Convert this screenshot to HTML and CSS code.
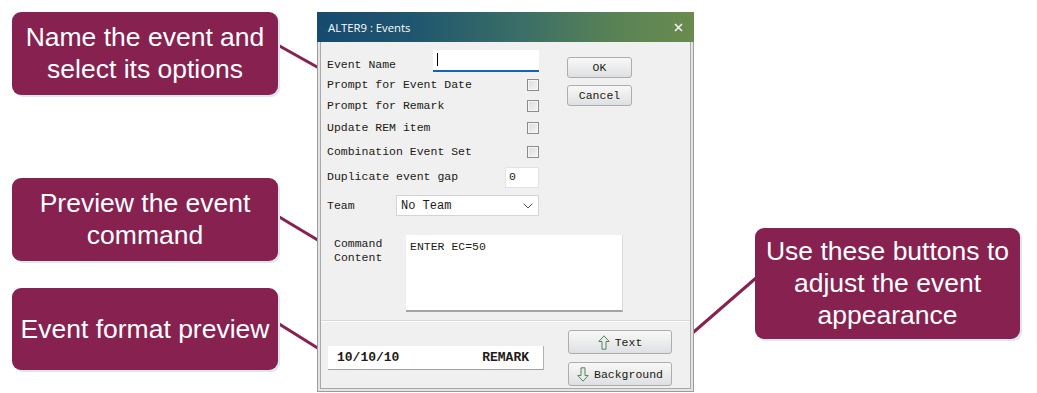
FILE: index.html
```html
<!doctype html>
<html>
<head>
	<meta charset="utf-8">
	<title>ALTER9 : Events</title>
	<link rel="stylesheet" href="styles.css">
</head>
<body>
	<div class="canvas">
		<svg class="links" width="1037" height="393" viewBox="0 0 1037 393">
			<line x1="276" y1="44" x2="326" y2="72"/>
			<line x1="276" y1="215" x2="331" y2="248"/>
			<line x1="276" y1="322" x2="332" y2="357"/>
			<line x1="756" y1="278" x2="681" y2="343"/>
		</svg>

		<div class="callout c-name">Name the event and select its options</div>
		<div class="callout c-command">Preview the event command</div>
		<div class="callout c-format">Event format preview</div>
		<div class="callout c-buttons">Use these buttons to adjust the event appearance</div>

		<div class="dialog">
			<div class="titlebar">
				<span class="title">ALTER9 : Events</span>
				<svg class="close" width="9" height="9" viewBox="0 0 9 9">
					<path d="M1 1 L8 8 M8 1 L1 8"/>
				</svg>
			</div>
			<div class="client">
				<div class="client-inside">
					<div class="upper">
						<div class="form">
							<div class="row row-name">
								<span class="label">Event Name</span>
								<div class="field name"><span class="caret"></span></div>
							</div>
							<div class="row r2">
								<span class="label">Prompt for Event Date</span>
								<span class="check"></span>
							</div>
							<div class="row r3">
								<span class="label">Prompt for Remark</span>
								<span class="check"></span>
							</div>
							<div class="row r4">
								<span class="label">Update REM item</span>
								<span class="check"></span>
							</div>
							<div class="row r5">
								<span class="label">Combination Event Set</span>
								<span class="check"></span>
							</div>
							<div class="row r6">
								<span class="label">Duplicate event gap</span>
								<div class="field gap">0</div>
							</div>
							<div class="row r7">
								<span class="label">Team</span>
								<div class="select">
									<span>No Team</span>
									<svg width="10" height="6" viewBox="0 0 10 6"><path d="M0.5 0.5 L5 5 L9.5 0.5"/></svg>
								</div>
							</div>
						</div>
						<div class="actions">
							<button class="btn">OK</button>
							<button class="btn">Cancel</button>
						</div>
					</div>

					<div class="command">
						<span class="label">Command<br>Content</span>
						<div class="textarea">ENTER EC=50</div>
					</div>

					<div class="footer">
						<div class="preview">
							<span>10/10/10</span>
							<span>REMARK</span>
						</div>
						<div class="colors">
							<button class="btn wide">
								<svg width="12" height="15" viewBox="0 0 12 15"><path d="M6 0.8 L11.2 6.5 L8 6.5 L8 14.2 L4 14.2 L4 6.5 L0.8 6.5 Z"/></svg>
								Text
							</button>
							<button class="btn wide">
								<svg width="12" height="15" viewBox="0 0 12 15"><path d="M6 14.2 L11.2 8.5 L8 8.5 L8 0.8 L4 0.8 L4 8.5 L0.8 8.5 Z"/></svg>
								Background
							</button>
						</div>
					</div>
				</div>
			</div>
		</div>
	</div>
</body>
</html>
```

FILE: styles.css
```css
:root {
	--wine: #87214f;
	--face: #f0f0f0;
	--mono: "Liberation Mono", "Courier New", monospace;
}
body {
	margin: 0;
	padding: 0;
	background: white;
}
.canvas {
	position: relative;
	width: 1037px;
	height: 393px;
	overflow: hidden;
}

/* callouts */
.links {
	position: absolute;
	left: 0;
	top: 0;
}
.links line {
	stroke: var(--wine);
	stroke-width: 3;
}
.callout {
	position: absolute;
	display: flex;
	align-items: center;
	justify-content: center;
	box-sizing: border-box;
	width: 266px;
	padding: 0 6px 1px;
	background: var(--wine);
	border-radius: 9px;
	box-shadow: 2px 2px 0 #dbe6f4;
	color: white;
	font-family: "Liberation Sans", Arial, sans-serif;
	font-size: 26.5px;
	line-height: 32px;
	text-align: center;
}
.c-name {
	left: 12px;
	top: 12px;
	height: 83px;
}
.c-command {
	left: 12px;
	top: 178px;
	height: 83px;
}
.c-format {
	left: 12px;
	top: 288px;
	height: 82px;
	padding: 0;
}
.c-buttons {
	left: 755px;
	top: 228px;
	height: 111px;
	width: 265px;
}

/* dialog window */
.dialog {
	position: absolute;
	left: 317px;
	top: 12px;
	width: 377px;
	height: 380px;
	display: flex;
	flex-direction: column;
}
.titlebar {
	height: 30px;
	flex: none;
	display: flex;
	align-items: center;
	justify-content: space-between;
	padding: 0 11px;
	background: linear-gradient(90deg, #164a6f 0%, #1f566f 25%, #3b6f66 55%, #5a8355 80%, #6a8b4e 100%);
	color: white;
	font-family: "Open Sans", "Segoe UI", sans-serif;
	font-size: 11.3px;
}
.close path {
	stroke: #eeeeee;
	stroke-width: 1.7;
	fill: none;
}
.client {
	flex: 1;
	display: flex;
	border: 1px solid #9b9b9b;
	border-top: none;
	background: #e4e4e4;
	padding: 0 2px 2px;
}
.client-inside {
	flex: 1;
	display: flex;
	flex-direction: column;
	border: 1px solid #a9a9a9;
	border-top: none;
	background: var(--face);
	font-family: var(--mono);
	font-size: 11.5px;
	color: #221a14;
}

.upper {
	display: flex;
	padding: 8px 0 0 6px;
}
.form {
	width: 212px;
	display: flex;
	flex-direction: column;
}
.row {
	display: flex;
	align-items: center;
	height: 22px;
}
.row-name {
	align-items: flex-end;
}
.row-name .label {
	margin-bottom: 0;
}
.r2 { margin-top: 2px; }
.r3 { height: 20px; }
.r4 { margin-top: 1px; }
.r5 { margin-top: 2px; }
.r6 { margin-top: 3px; }
.r7 { margin-top: 7px; height: 21px; }

.label {
	white-space: nowrap;
	line-height: 14px;
}
.field {
	margin-left: auto;
	box-sizing: border-box;
	height: 21px;
	background: white;
}
.field.name {
	width: 106px;
	height: 22px;
	border-bottom: 2px solid #1265b5;
	padding: 3px 0 0 4px;
}
.caret {
	display: block;
	width: 1px;
	height: 13px;
	background: black;
}
.field.gap {
	width: 34px;
	border: 1px solid #e3e3e3;
	padding: 2px 0 0 3px;
}
.check {
	margin-left: auto;
	box-sizing: border-box;
	width: 12px;
	height: 12px;
	border: 1px solid #8c8c8c;
	background: linear-gradient(135deg, #dcdcdc, #f4f4f4);
	box-shadow: inset 0 0 0 1px #f6f6f6;
}
.select {
	margin-left: auto;
	box-sizing: border-box;
	width: 143px;
	height: 21px;
	display: flex;
	align-items: center;
	justify-content: space-between;
	padding: 0 5px 0 4px;
	background: white;
	border: 1px solid #d4d4d4;
	font-size: 12px;
}
.select path {
	stroke: #555;
	stroke-width: 1;
	fill: none;
}

.actions {
	display: flex;
	flex-direction: column;
	gap: 7px;
	margin: 7px 0 0 28px;
}
.btn {
	box-sizing: border-box;
	width: 65px;
	height: 21px;
	padding: 0;
	display: flex;
	align-items: center;
	justify-content: center;
	gap: 5px;
	border: 1px solid #adadad;
	border-radius: 3px;
	background: linear-gradient(#f8f8f8, #ececec 50%, #dde0e3);
	font-family: var(--mono);
	font-size: 11.5px;
	color: #221a14;
}
.btn svg path {
	fill: #e4f1e2;
	stroke: #5d7d6e;
	stroke-width: 1;
}

.command {
	display: flex;
	margin: 19px 0 0 13px;
}
.command .label {
	width: 72px;
	padding-top: 2px;
}
.textarea {
	box-sizing: border-box;
	width: 217px;
	height: 77px;
	padding: 5px 4px;
	background: white;
	border-right: 1px solid #dadada;
	border-bottom: 2px solid #a3a3a3;
	font-size: 11.5px;
}

.footer {
	flex: 1;
	display: flex;
	margin-top: 8px;
	padding: 9px 0 0 7px;
	border-top: 1px solid #d9d9d9;
	box-shadow: inset 0 1px 0 white;
}
.preview {
	box-sizing: border-box;
	width: 216px;
	height: 24px;
	margin-top: 16px;
	display: flex;
	align-items: center;
	justify-content: space-between;
	padding: 0 14px 0 9px;
	background: white;
	border-right: 1px solid #b3b3b3;
	border-bottom: 1px solid #9f9f9f;
	font-size: 13px;
	font-weight: bold;
}
.colors {
	display: flex;
	flex-direction: column;
	gap: 8px;
	margin-left: 24px;
}
.btn.wide {
	width: 104px;
	height: 24px;
}
```
